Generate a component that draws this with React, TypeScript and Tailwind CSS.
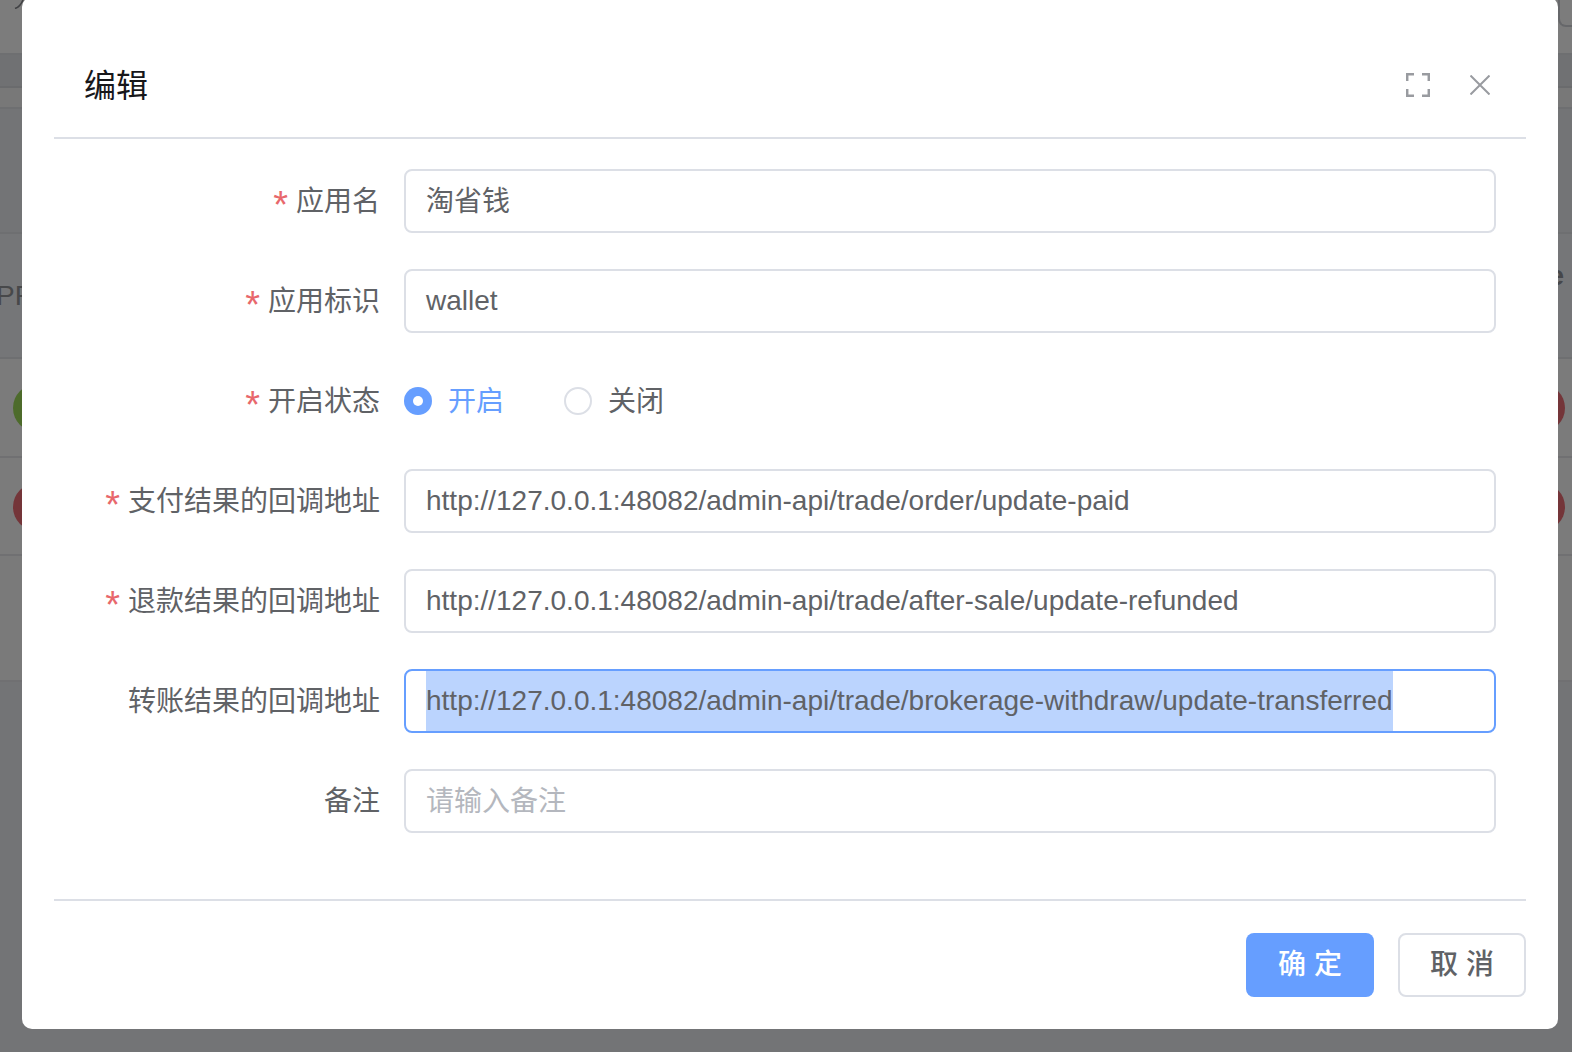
const cjk = "font-['Liberation_Sans','Noto_Sans_CJK_SC',sans-serif]";

function Label({ text, required }: { text: string; required?: boolean }) {
  return (
    <label className="flex h-full w-[350px] shrink-0 items-center justify-end pt-[2px] pr-[24px] text-[28px] text-[#606266]">
      {required && <span className="mt-[6px] mr-[8px] text-[38px] leading-none text-[#e8686c]">*</span>}
      {text}
    </label>
  );
}

function Field({ label, value, required, placeholder, selected, cjkValue }: {
  label: string;
  value?: string;
  required?: boolean;
  placeholder?: string;
  selected?: boolean;
  cjkValue?: boolean;
}) {
  return (
    <div className="mb-[36px] flex h-[64px]">
      <Label text={label} required={required} />
      <div
        className={`flex min-w-0 flex-1 items-center overflow-hidden rounded-[8px] border-2 bg-white px-[20px] text-[28px] whitespace-nowrap ${
          selected ? 'border-[#669eff]' : 'border-[#dcdfe6]'
        } ${cjkValue ? 'pt-[2px]' : ''}`}
      >
        {selected ? (
          <span className="flex h-[60px] items-center bg-[#bbd4fe] text-[#606266]">{value}</span>
        ) : value ? (
          <span className="text-[#606266]">{value}</span>
        ) : (
          <span className="text-[#b4b7be]">{placeholder}</span>
        )}
      </div>
    </div>
  );
}

function Backdrop() {
  return (
    <div className="flex h-full flex-col bg-[#737476] font-['Liberation_Sans',sans-serif]">
      <div className="flex h-[55px] justify-between border-b-2 border-[#6e6f71] bg-[#7c7c7c]">
        <svg className="ml-[14px] h-[9px] w-[12px]" viewBox="0 0 12 9" fill="none">
          <path d="M1 8.5C4 7.5 7 5 9 0" stroke="#404144" strokeWidth="1.6" />
        </svg>
        <div className="mr-[-20px] h-[27px] w-[34px] rounded-bl-[8px] border-2 border-t-0 border-[#66676a]" />
      </div>
      <div className="h-[33px] border-b-2 border-[#6a6b6d] bg-[#707173]" />
      <div className="h-[21px] border-b-2 border-[#6e6f71] bg-[#787878]" />
      <div className="h-[125px] border-b-2 border-[#6e6f71] bg-[#737476]" />
      <div className="flex h-[125px] items-center justify-between border-b-2 border-[#6e6f71] bg-[#757678]">
        <span className="ml-[-4px] text-[28px] text-[#47484a]">PP</span>
        <span className="mr-[8px] mb-[40px] text-[28px] font-bold text-[#46474a]">e</span>
      </div>
      <div className="flex h-[99px] items-center justify-between border-b-2 border-[#707072] bg-[#7b7b7b] px-[7px] pt-[1px] pl-[13px]">
        <div className="h-[48px] w-[48px] rounded-full bg-[#4d6b2b]" />
        <div className="h-[48px] w-[48px] rounded-full bg-[#743539]" />
      </div>
      <div className="flex h-[98px] items-center justify-between border-b-2 border-[#707072] bg-[#7b7b7b] px-[7px] pt-[1px] pl-[13px]">
        <div className="h-[48px] w-[48px] rounded-full bg-[#743539]" />
        <div className="h-[48px] w-[48px] rounded-full bg-[#743539]" />
      </div>
      <div className="h-[126px] border-b-2 border-[#707072] bg-[#7a7a7a]" />
    </div>
  );
}

export default function App() {
  return (
    <div className={`relative h-[1052px] w-full overflow-hidden ${cjk}`}>
      <Backdrop />

      <div className="absolute top-[-3px] left-[22px] w-[1536px] rounded-[10px] bg-white px-[32px] pb-[32px]">
        <div className="flex h-[142px] items-center justify-between border-b-2 border-[#dcdfe6] pt-[36px] pr-[36px] pl-[30px]">
          <span className="pt-[2px] text-[32px] text-[#17171a]">编辑</span>
          <div className="flex items-center gap-[40px]">
            <svg className="h-[24px] w-[24px]" viewBox="0 0 24 24" fill="none" stroke="#999ba0" strokeWidth="2.5">
              <path d="M1.2 8V1.2H8M16 1.2h6.8V8M22.8 16v6.8H16M8 22.8H1.2V16" />
            </svg>
            <svg className="h-[20px] w-[20px]" viewBox="0 0 20 20" fill="none" stroke="#999ba0" strokeWidth="2">
              <path d="M.5.5l19 19M19.5.5l-19 19" />
            </svg>
          </div>
        </div>

        <div className="pt-[30px] pr-[30px] pb-[30px]">
          <Field label="应用名" value="淘省钱" required cjkValue />
          <Field label="应用标识" value="wallet" required />
          <div className="mb-[36px] flex h-[64px]">
            <Label text="开启状态" required />
            <div className="flex items-center">
              <span className="flex h-[28px] w-[28px] items-center justify-center rounded-full bg-[#669eff]">
                <span className="h-[10px] w-[10px] rounded-full bg-white" />
              </span>
              <span className="ml-[16px] pt-[2px] text-[28px] text-[#669eff]">开启</span>
              <span className="ml-[60px] h-[28px] w-[28px] rounded-full border-2 border-[#dcdfe6]" />
              <span className="ml-[16px] pt-[2px] text-[28px] text-[#606266]">关闭</span>
            </div>
          </div>
          <Field label="支付结果的回调地址" value="http://127.0.0.1:48082/admin-api/trade/order/update-paid" required />
          <Field label="退款结果的回调地址" value="http://127.0.0.1:48082/admin-api/trade/after-sale/update-refunded" required />
          <Field label="转账结果的回调地址" value="http://127.0.0.1:48082/admin-api/trade/brokerage-withdraw/update-transferred" selected />
          <Field label="备注" placeholder="请输入备注" cjkValue />
        </div>

        <div className="flex justify-end gap-[24px] border-t-2 border-[#dcdfe6] pt-[32px]">
          <button className="h-[64px] w-[128px] rounded-[8px] bg-[#669eff] text-[28px] font-medium text-white">确 定</button>
          <button className="h-[64px] w-[128px] rounded-[8px] border-2 border-[#dcdfe6] bg-white text-[28px] font-medium text-[#606266]">取 消</button>
        </div>
      </div>
    </div>
  );
}
